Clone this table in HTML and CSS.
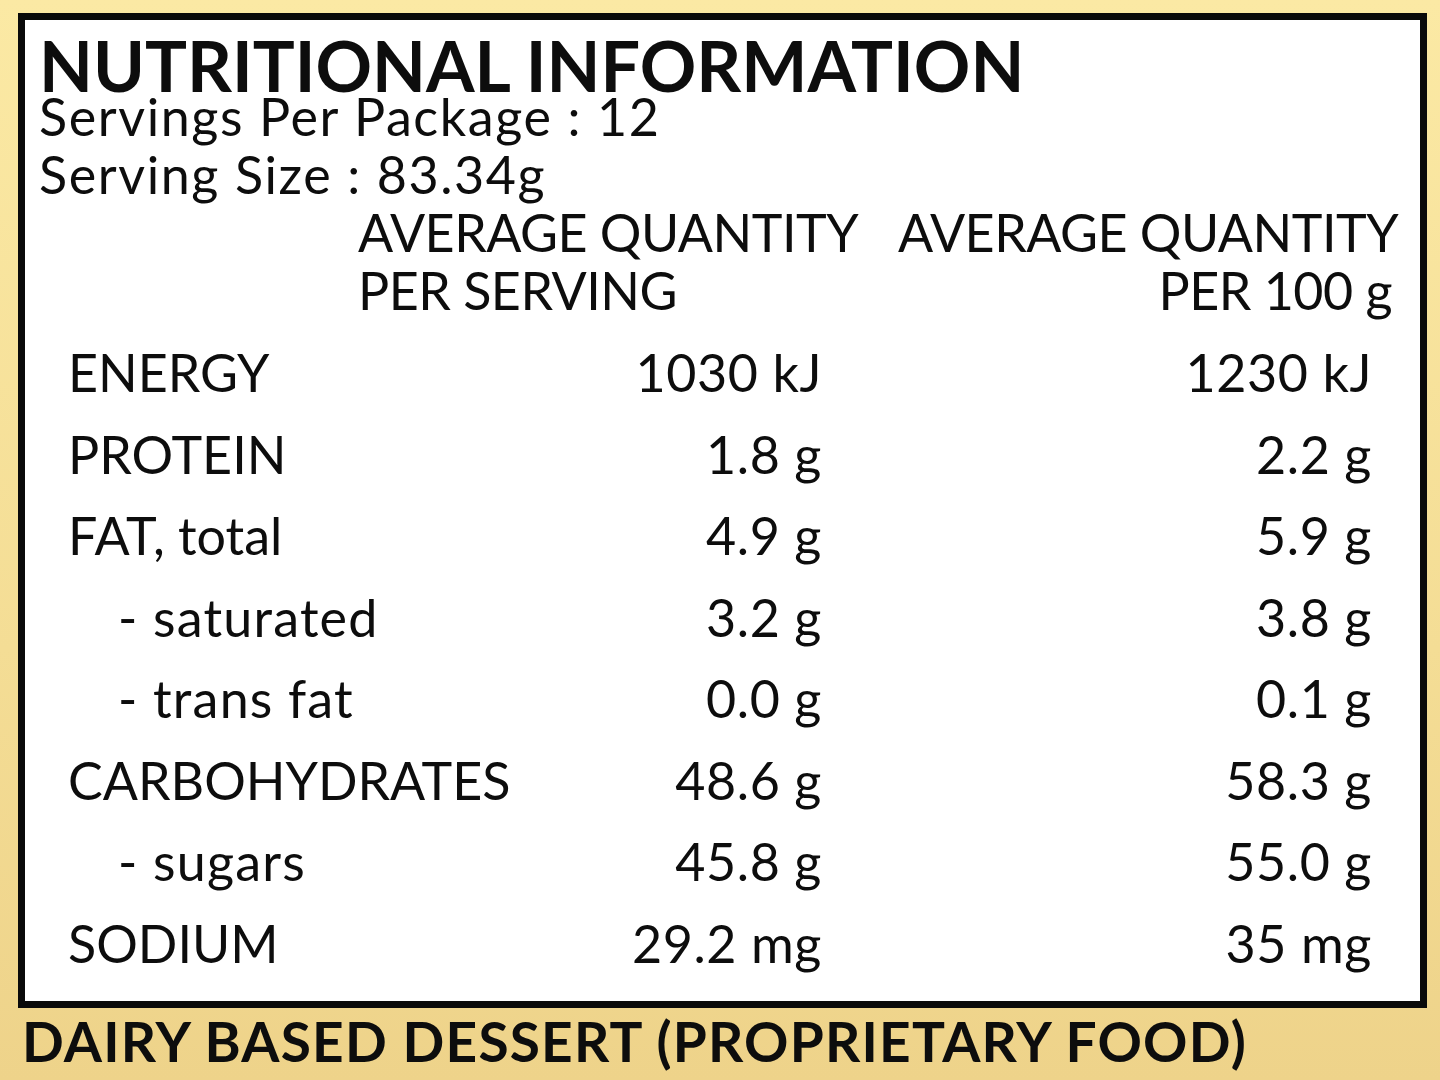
FILE: index.html
```html
<!DOCTYPE html>
<html lang="en">
<head>
<meta charset="utf-8">
<title>Nutritional Information</title>
<link rel="stylesheet" href="styles.css">
</head>
<body>
<main class="label">
  <section class="panel">
    <h1 class="title">NUTRITIONAL INFORMATION</h1>
    <p class="meta">Servings Per Package : 12</p>
    <p class="meta">Serving Size : 83.34g</p>
    <div class="head">
      <div class="head-col1">AVERAGE QUANTITY<br>PER SERVING</div>
      <div class="head-col2">AVERAGE QUANTITY<br><span class="per">PER 100 g</span></div>
    </div>
    <div class="rows">
      <div class="row"><span class="name">ENERGY</span><span class="v">1030 kJ</span><span class="v">1230 kJ</span></div>
      <div class="row"><span class="name">PROTEIN</span><span class="v">1.8 g</span><span class="v">2.2 g</span></div>
      <div class="row"><span class="name">FAT, total</span><span class="v">4.9 g</span><span class="v">5.9 g</span></div>
      <div class="row"><span class="name sub">- saturated</span><span class="v">3.2 g</span><span class="v">3.8 g</span></div>
      <div class="row"><span class="name sub">- trans fat</span><span class="v">0.0 g</span><span class="v">0.1 g</span></div>
      <div class="row"><span class="name">CARBOHYDRATES</span><span class="v">48.6 g</span><span class="v">58.3 g</span></div>
      <div class="row"><span class="name sub">- sugars</span><span class="v">45.8 g</span><span class="v">55.0 g</span></div>
      <div class="row"><span class="name">SODIUM</span><span class="v">29.2 mg</span><span class="v">35 mg</span></div>
    </div>
  </section>
  <p class="footer">DAIRY BASED DESSERT (PROPRIETARY FOOD)</p>
</main>
</body>
</html>
```

FILE: styles.css
```css
html, body {
  margin: 0;
  padding: 0;
}
body {
  width: 1440px;
  height: 1080px;
  overflow: hidden;
  background: linear-gradient(180deg, #fbe9a4 0%, #f4dd95 60%, #eed38a 100%);
  font-family: Lato, "Open Sans", sans-serif;
  color: #0d0d0d;
}
.label {
  padding: 13px 13px 0 18px;
}
.panel {
  box-sizing: border-box;
  width: 1409px;
  height: 995px;
  border: 7px solid #0a0a0a;
  background: #fff;
  padding: 23px 0 0 14px;
}
.title {
  margin: 0;
  font-size: 70px;
  font-weight: 700;
  line-height: 44px;
  letter-spacing: 0;
  white-space: nowrap;
}
.meta {
  margin: 0;
  font-size: 52px;
  line-height: 58px;
  letter-spacing: 1.6px;
  white-space: nowrap;
}
.head {
  display: grid;
  grid-template-columns: 319px 540px 500px;
  font-size: 52px;
  line-height: 58px;
  letter-spacing: -0.5px;
  white-space: nowrap;
}
.head-col1 {
  grid-column: 2;
}
.head-col2 {
  grid-column: 3;
  text-align: right;
}
.per {
  margin-right: 6px;
}
.rows {
  padding: 13px 0 0 29px;
}
.row {
  display: grid;
  grid-template-columns: 494px 260px 550px;
  font-size: 52px;
  line-height: 81.5px;
  white-space: nowrap;
}
.name.sub {
  padding-left: 50px;
  letter-spacing: 1.2px;
}
.v {
  text-align: right;
  letter-spacing: 0.6px;
}
.footer {
  margin: 0;
  padding: 3px 0 0 4px;
  font-size: 55px;
  font-weight: 700;
  line-height: 60px;
  letter-spacing: 1.2px;
  white-space: nowrap;
}
```
